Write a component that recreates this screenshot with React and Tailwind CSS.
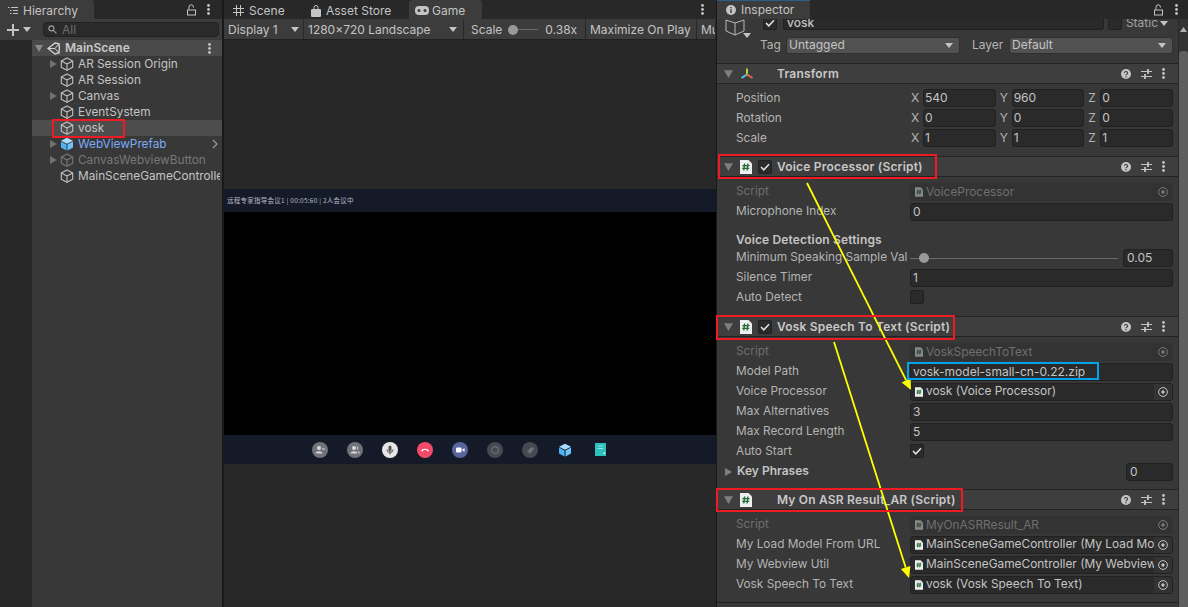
import React from "react";

const F = { fontFamily: "Inter, 'Liberation Sans', sans-serif" };

function Cube({ className = "", color = "#c2c2c2", size = 14 }) {
  return (
    <svg width={size} height={size} viewBox="0 0 14 14" fill="none" stroke={color} strokeWidth="1.1" strokeLinejoin="round" className={"shrink-0 " + className}>
      <path d="M7 1 L12.7 4 V10.2 L7 13.2 L1.3 10.2 V4 Z" />
      <path d="M1.3 4 L7 7 L12.7 4 M7 7 V13.2" />
    </svg>
  );
}
function BlueCube() {
  return (
    <svg width="14" height="14" viewBox="0 0 14 14" className="shrink-0">
      <path d="M7 .8 L13 3.8 L7 6.8 L1 3.8 Z" fill="#a6dcff" />
      <path d="M1 4.6 L6.5 7.4 V13.4 L1 10.6 Z" fill="#4fb2f5" />
      <path d="M13 4.6 L7.5 7.4 V13.4 L13 10.6 Z" fill="#6cc4fb" />
    </svg>
  );
}
function Tri({ dir = "down", className = "", color = "#8a8a8a", w = 8, h = 8 }) {
  const d = dir === "down" ? "M0 1 H8 L4 8 Z" : "M1 0 L8 4 L1 8 Z";
  return (
    <svg width={w} height={h} viewBox="0 0 8 8" className={"shrink-0 " + className}>
      <path d={d} fill={color} />
    </svg>
  );
}
function Caret({ className = "" }) {
  return (
    <svg width="8" height="5" viewBox="0 0 8 5" className={"shrink-0 " + className}>
      <path d="M0 0 H8 L4 5 Z" fill="#c4c4c4" />
    </svg>
  );
}
function Lock() {
  return (
    <svg width="9" height="12" viewBox="0 0 9 12" fill="none" className="shrink-0">
      <path d="M2 5.5 V3 A2.2 2.2 0 0 1 6.4 3 V3.6" stroke="#c4c4c4" strokeWidth="1" />
      <rect x=".5" y="6" width="8" height="5" stroke="#c4c4c4" strokeWidth="1" />
    </svg>
  );
}
function Dots({ color = "#c4c4c4" }) {
  return (
    <svg width="3" height="11" viewBox="0 0 3 11" className="shrink-0">
      <circle cx="1.5" cy="1.5" r="1.4" fill={color} />
      <circle cx="1.5" cy="5.5" r="1.4" fill={color} />
      <circle cx="1.5" cy="9.5" r="1.4" fill={color} />
    </svg>
  );
}
function ScriptIcon({ size = 12, dim = false }) {
  const w = size === 12 ? 12 : 8;
  const h = size === 12 ? 14 : 10;
  return (
    <svg width={w} height={h} viewBox="0 0 12 14" className="shrink-0" opacity={dim ? 0.45 : 1}>
      <path d="M0 0 H8.5 L12 3.5 V14 H0 Z" fill="#efefef" />
      <path d="M4.6 3.5 L3.8 10.5 M7.9 3.5 L7.1 10.5 M2.4 5.6 H9.5 M2.2 8.4 H9.2" stroke="#1f6b34" strokeWidth="1.4" fill="none" />
    </svg>
  );
}
function Check({ on = true, className = "" }) {
  return (
    <span className={"flex h-[14px] w-[14px] shrink-0 items-center justify-center rounded-[2px] border border-[#202020] bg-[#2a2a2a] " + className}>
      {on && (
        <svg width="10" height="8" viewBox="0 0 10 8" fill="none">
          <path d="M1 4 L3.8 6.8 L9 1.2" stroke="#e2e2e2" strokeWidth="1.5" />
        </svg>
      )}
    </span>
  );
}
function Help() {
  return (
    <svg width="10" height="10" viewBox="0 0 10 10" className="shrink-0">
      <circle cx="5" cy="5" r="5" fill="#c4c4c4" />
      <path d="M3.4 3.9 A1.6 1.5 0 1 1 5.4 5.4 C5 5.6 5 5.8 5 6.3" stroke="#3e3e3e" strokeWidth="1.1" fill="none" />
      <circle cx="5" cy="7.8" r=".7" fill="#3e3e3e" />
    </svg>
  );
}
function Sliders() {
  return (
    <svg width="11" height="10" viewBox="0 0 11 10" className="shrink-0" stroke="#c4c4c4" strokeWidth="1.2">
      <path d="M0 2.5 H11 M0 7.5 H11" />
      <path d="M7 0 V5 M4 5 V10" strokeWidth="1.8" />
    </svg>
  );
}
function Target({ dim = false }) {
  return (
    <span className={"flex h-full w-[18px] shrink-0 items-center justify-center bg-[#333333] " + (dim ? "opacity-50" : "")}>
      <svg width="10" height="10" viewBox="0 0 10 10">
        <circle cx="5" cy="5" r="4.4" fill="none" stroke="#c4c4c4" strokeWidth="1" />
        <circle cx="5" cy="5" r="1.7" fill="#c4c4c4" />
      </svg>
    </span>
  );
}
function UnityLogo() {
  return (
    <svg width="13" height="13" viewBox="0 0 13 13" className="shrink-0" fill="none" stroke="#d2d2d2" strokeWidth="1.4">
      <path d="M8 1 L12 1.8 L12.4 6.5 L12 11 L8 12 L1 6.5 Z" />
      <path d="M1 6.5 H8 L12 1.8 M8 6.5 L12 11" strokeWidth="1" />
    </svg>
  );
}
function TransformIcon() {
  return (
    <svg width="14" height="14" viewBox="0 0 14 14" className="shrink-0">
      <path d="M7 7.5 V1.5" stroke="#a5dc3c" strokeWidth="2" />
      <path d="M7 7.5 L1.5 11" stroke="#5cc4f0" strokeWidth="2" />
      <path d="M7 7.5 L12.5 11" stroke="#f0663c" strokeWidth="2" />
    </svg>
  );
}

function TreeRow({ label, arrow, selected, color = "text-[#c4c4c4]", icon, ext }) {
  return (
    <div className={"flex h-4 items-center pl-[17px] pr-[2px] " + (selected ? "bg-[#4d4d4d]" : "")}>
      <span className="flex w-[11px] shrink-0 items-center">{arrow && <Tri dir="right" color="#707070" />}</span>
      <span className="flex w-[18px] shrink-0 items-center">{icon || <Cube />}</span>
      <span className={"min-w-0 flex-1 overflow-hidden whitespace-nowrap text-[11.8px] leading-4 " + color}>{label}</span>
      {ext && (
        <svg width="6" height="10" viewBox="0 0 6 10" fill="none" className="mr-[2px] shrink-0">
          <path d="M1 1 L5 5 L1 9" stroke="#9a9a9a" strokeWidth="1.2" />
        </svg>
      )}
    </div>
  );
}

function Hierarchy() {
  return (
    <div className="flex h-full w-[222px] shrink-0 flex-col bg-[#383838]">
      <div className="flex h-[19px] shrink-0 items-stretch bg-[#282828]">
        <div className="flex w-[94px] items-center gap-[5px] rounded-tr-[3px] bg-[#3c3c3c] pl-[8px] pt-[2px] text-[12px] text-[#c4c4c4]">
          <svg width="10" height="9" viewBox="0 0 10 9" stroke="#c4c4c4" strokeWidth="1">
            <path d="M0 1.5 H1.5 M3 1.5 H10 M2 4.5 H3.5 M5 4.5 H10 M2 7.5 H3.5 M5 7.5 H10" />
          </svg>
          Hierarchy
        </div>
        <div className="ml-auto flex items-center gap-[11px] pr-[12px]">
          <Lock />
          <Dots />
        </div>
      </div>
      <div className="flex h-[21px] shrink-0 items-center bg-[#3c3c3c] pl-[7px] pr-[3px]">
        <svg width="12" height="12" viewBox="0 0 12 12" stroke="#c4c4c4" strokeWidth="2" className="shrink-0">
          <path d="M6 0 V12 M0 6 H12" />
        </svg>
        <Caret className="ml-[4px]" />
        <div className="ml-[12px] flex h-[15px] flex-1 items-center gap-[5px] rounded-[4px] border border-[#212121] bg-[#2a2a2a] pl-[4px] text-[12px] text-[#6d6d6d]">
          <svg width="9" height="9" viewBox="0 0 9 9" fill="none" stroke="#a0a0a0" strokeWidth="1.1">
            <circle cx="3.4" cy="3.4" r="2.5" />
            <path d="M5.4 5.4 L8.4 8.4" />
          </svg>
          All
        </div>
      </div>
      <div className="flex min-h-0 flex-1">
        <div className="w-[32px] shrink-0 bg-[#282828]" />
        <div className="min-w-0 flex-1">
          <div className="flex h-4 items-center bg-[#4a4a4a] pl-[3px] pr-[11px]">
            <Tri color="#8a8a8a" className="mr-[4px]" />
            <UnityLogo />
            <span className="ml-[5px] flex-1 text-[12px] font-semibold leading-4 text-[#c8c8c8]">MainScene</span>
            <Dots />
          </div>
          <TreeRow label="AR Session Origin" arrow />
          <TreeRow label="AR Session" />
          <TreeRow label="Canvas" arrow />
          <TreeRow label="EventSystem" />
          <TreeRow label="vosk" selected />
          <TreeRow label="WebViewPrefab" arrow icon={<BlueCube />} color="text-[#7baaf7]" ext />
          <TreeRow label="CanvasWebviewButton" arrow icon={<Cube color="#777777" />} color="text-[#777777]" />
          <TreeRow label="MainSceneGameController" />
        </div>
      </div>
    </div>
  );
}

function TB({ children, className = "" }) {
  return <div className={"flex h-[20px] shrink-0 items-center border-r border-[#282828] bg-[#3c3c3c] pt-px text-[12px] text-[#c4c4c4] " + className}>{children}</div>;
}

function MeetBtn({ bg, children }) {
  return (
    <span className="flex h-4 w-4 shrink-0 items-center justify-center rounded-full" style={{ background: bg }}>
      <svg width="10" height="10" viewBox="0 0 10 10">{children}</svg>
    </span>
  );
}

function Game() {
  return (
    <div className="flex h-full min-w-0 flex-1 flex-col bg-[#282828]">
      <div className="flex h-[19px] shrink-0 items-stretch text-[12px] text-[#c4c4c4]">
        <div className="flex w-[80px] items-center gap-[5px] pl-[9px] pt-[2px]">
          <svg width="11" height="11" viewBox="0 0 11 11" stroke="#c4c4c4" strokeWidth="1" className="shrink-0">
            <path d="M3.5 0 V11 M7.5 0 V11 M0 3.5 H11 M0 7.5 H11" />
          </svg>
          Scene
        </div>
        <div className="flex w-[105px] items-center gap-[5px] pl-[7px] pt-[2px]">
          <svg width="10" height="12" viewBox="0 0 10 12" className="shrink-0">
            <path d="M3 4 V2.5 A2 2 0 0 1 7 2.5 V4" fill="none" stroke="#c4c4c4" />
            <rect y="4" width="10" height="8" rx="1" fill="#c4c4c4" />
          </svg>
          Asset Store
        </div>
        <div className="flex w-[73px] items-center gap-[3px] rounded-t-[3px] bg-[#3c3c3c] pl-[6px] pt-[2px]">
          <svg width="14" height="9" viewBox="0 0 14 9" className="shrink-0">
            <rect width="14" height="9" rx="4" fill="#c4c4c4" />
            <circle cx="4" cy="4.5" r="1.5" fill="#3c3c3c" />
            <circle cx="10" cy="4.5" r="1.5" fill="#3c3c3c" />
          </svg>
          Game
        </div>
        <div className="ml-auto flex items-center pr-[12px]">
          <Dots />
        </div>
      </div>
      <div className="flex h-[21px] shrink-0 items-start overflow-hidden border-b border-[#202020] bg-[#3c3c3c]">
        <TB className="w-[80px] justify-between pl-[4px] pr-[4px]">
          Display 1
          <Caret />
        </TB>
        <TB className="w-[160px] justify-between pl-[4px] pr-[6px]">
          1280x720 Landscape
          <Caret />
        </TB>
        <TB className="w-[122px] pl-[7px]">
          Scale
          <span className="relative ml-[6px] flex h-[10px] w-[30px] items-center">
            <span className="h-px w-full bg-[#6a6a6a]" />
            <span className="absolute left-0 h-[10px] w-[10px] rounded-full bg-[#999999]" />
          </span>
          <span className="ml-[7px]">0.38x</span>
        </TB>
        <TB className="w-[111px] pl-[4px]">Maximize On Play</TB>
        <TB className="w-[19px] overflow-hidden pl-[4px]">Mute</TB>
      </div>
      <div className="flex min-h-0 flex-1 flex-col justify-start pt-[149px]">
        <div className="flex h-[275px] flex-col bg-black">
          <div className="flex h-[23px] shrink-0 items-center whitespace-nowrap bg-[#141a28] pl-[3px] text-[6.5px] tracking-[0.25px] text-[#b9bcc2]" style={{ fontFamily: "'Noto Sans CJK SC', sans-serif" }}>
            远程专家指导会议1 | 00:05:60 | 2人会议中
          </div>
          <div className="flex-1" />
          <div className="flex h-[29px] shrink-0 items-center bg-[#141a28] pl-[88px]">
            <div className="flex items-center gap-[19px]">
              <MeetBtn bg="#6f7278">
                <circle cx="4" cy="3" r="2" fill="#d8d8d8" />
                <path d="M0.5 8.5 C1 5.5 7 5.5 7.5 8.5 Z" fill="#d8d8d8" />
                <path d="M7 4 H10" stroke="#d8d8d8" />
              </MeetBtn>
              <MeetBtn bg="#6f7278">
                <circle cx="4" cy="3" r="2" fill="#d8d8d8" />
                <path d="M0.5 8.5 C1 5.5 7 5.5 7.5 8.5 Z" fill="#d8d8d8" />
                <path d="M7 1.5 A2 2 0 0 1 7 4.5 M8 6 L9.5 8.5" stroke="#d8d8d8" fill="none" />
              </MeetBtn>
              <MeetBtn bg="#e6e6e6">
                <rect x="3.5" y="0.5" width="3" height="6" rx="1.5" fill="#555555" />
                <path d="M2 4.5 A3 3 0 0 0 8 4.5 M5 7.5 V9.5" stroke="#555555" fill="none" />
              </MeetBtn>
              <MeetBtn bg="#f24a68">
                <path d="M1 6 C2 3 8 3 9 6 L7 6.5 L6.7 5 H3.3 L3 6.5 Z" fill="#ffffff" />
              </MeetBtn>
              <MeetBtn bg="#56659c">
                <rect x="1" y="2.5" width="5.5" height="5" rx="1" fill="#ffffff" />
                <path d="M7 5 L9.5 3 V7 Z" fill="#ffffff" />
              </MeetBtn>
              <MeetBtn bg="#454952">
                <circle cx="5" cy="5" r="3.4" fill="none" stroke="#6f7278" strokeWidth="1.1" />
              </MeetBtn>
              <MeetBtn bg="#454952">
                <path d="M2.5 7 L6.5 3 A1.1 1.1 0 0 1 8 4.5 L4 8.5 M4 6 L7 3" stroke="#797c84" strokeWidth="1.2" fill="none" />
              </MeetBtn>
              <span className="flex w-4 justify-center"><BlueCube /></span>
              <span className="flex w-4 justify-center">
                <svg width="11" height="13" viewBox="0 0 11 13">
                  <rect width="11" height="13" fill="#2cc1bd" />
                  <path d="M3 3 H8 M2.5 5.5 H8.5" stroke="#8fe4e0" />
                  <path d="M8 11 L10 9 V11 Z" fill="#ffffff" />
                </svg>
              </span>
            </div>
          </div>
        </div>
      </div>
    </div>
  );
}

function Row({ label, children, dim, bold, labelClass = "" }) {
  return (
    <div className="flex h-5 items-center pl-[19px] pr-[5px]">
      <span className={"w-[174px] shrink-0 overflow-hidden whitespace-nowrap " + (dim ? "text-[#6f6f6f] " : "text-[#b4b4b4] ") + (bold ? "text-[12px] font-semibold tracking-[0.15px] " : "text-[11.8px] ") + labelClass}>{label}</span>
      <div className="flex h-[18px] min-w-0 flex-1 items-center">{children}</div>
    </div>
  );
}
function Field({ children, pad = "pl-[2px]" }) {
  return (
    <div className={"flex h-[18px] min-w-0 flex-1 items-center overflow-hidden whitespace-nowrap rounded-[3px] border border-[#212121] bg-[#2a2a2a] text-[12px] text-[#c4c4c4] " + pad}>
      {children}
    </div>
  );
}
function ObjField({ text, dim }) {
  return (
    <div className={"flex h-[18px] min-w-0 flex-1 items-center overflow-hidden rounded-[3px] border " + (dim ? "border-[#333333] bg-[#333333]" : "border-[#212121] bg-[#2a2a2a]")}>
      <span className="ml-[4px] mr-[3px] flex shrink-0"><ScriptIcon size={8} dim={dim} /></span>
      <span className={"min-w-0 flex-1 overflow-hidden whitespace-nowrap text-[11.9px] " + (dim ? "text-[#6f6f6f]" : "-mt-[2px] text-[#c4c4c4]")}>{text}</span>
      <Target dim={dim} />
    </div>
  );
}
function Axis({ name, val }) {
  return (
    <div className="flex min-w-0 flex-1 items-center">
      <span className="w-[12px] shrink-0 text-[12px] text-[#b4b4b4]">{name}</span>
      <Field pad="pl-px">{val}</Field>
    </div>
  );
}
function Vec({ label, x, y, z }) {
  return (
    <div className="flex h-5 items-center pl-[19px] pr-[5px]">
      <span className="mt-[2px] w-[175px] shrink-0 text-[11.8px] text-[#b4b4b4]">{label}</span>
      <div className="flex flex-1 gap-[4px]">
        <Axis name="X" val={x} />
        <Axis name="Y" val={y} />
        <Axis name="Z" val={z} />
      </div>
    </div>
  );
}
function CompHeader({ icon, check, title }) {
  return (
    <div className="flex h-[21px] shrink-0 items-center border-y border-y-[#232323] bg-[#3e3e3e] pl-[7px] pr-[13px]">
      <Tri color="#7e7e7e" w={9} h={9} />
      <span className="ml-[7px] flex w-[16px] shrink-0">{icon}</span>
      <span className="ml-[2px] flex w-[16px] shrink-0">{check && <Check />}</span>
      <span className="ml-[3px] flex-1 whitespace-nowrap text-[12px] font-semibold tracking-[0.2px] text-[#c8c8c8]">{title}</span>
      <span className="flex items-center gap-[10px]">
        <Help />
        <Sliders />
        <Dots />
      </span>
    </div>
  );
}
function Select({ children }) {
  return (
    <div className="flex h-[17px] flex-1 items-center justify-between rounded-[3px] border border-[#303030] bg-[#515151] pl-[2px] pr-[6px] text-[12px] text-[#c4c4c4]">
      {children}
      <Caret />
    </div>
  );
}

function Inspector() {
  return (
    <div className="ml-[1px] flex h-full w-[471px] shrink-0 flex-col bg-[#383838]">
      <div className="flex h-[19px] shrink-0 items-stretch bg-[#282828]">
        <div className="flex w-[93px] flex-col rounded-tr-[3px] bg-[#3c3c3c]">
          <div className="h-[2px] bg-[#2c5d87]" />
          <div className="flex flex-1 items-center gap-[5px] pl-[9px] text-[12px] text-[#c4c4c4]">
            <svg width="10" height="10" viewBox="0 0 10 10" className="shrink-0">
              <circle cx="5" cy="5" r="5" fill="#c4c4c4" />
              <path d="M5 4.3 V8 M5 2 V3.2" stroke="#3c3c3c" strokeWidth="1.4" />
            </svg>
            Inspector
          </div>
        </div>
        <div className="ml-auto flex items-center gap-[12px] pr-[10px]">
          <Lock />
          <Dots />
        </div>
      </div>
      <div className="flex min-h-0 flex-1">
        <div className="min-w-0 flex-1 overflow-hidden">
          <div className="flex h-[11px] items-end overflow-hidden pl-[46px] pr-[10px]">
            <div className="flex h-[14px] w-full items-center">
              <Check />
              <div className="ml-[6px] flex h-[14px] flex-1 items-center rounded-[3px] border border-[#212121] bg-[#2a2a2a] pl-[3px] text-[12px] font-medium leading-none text-[#c4c4c4]">vosk</div>
              <span className="ml-[4px] h-[14px] w-[14px] shrink-0 rounded-[2px] border border-[#212121] bg-[#2a2a2a]" />
              <span className="ml-[4px] whitespace-nowrap text-[12px] text-[#a0a0a0]">Static</span>
              <Caret className="ml-[2px]" />
            </div>
          </div>
          <div className="flex h-[33px] items-start pr-[5px]">
            <div className="relative flex h-full w-[43px] shrink-0 pl-[8px]">
              <svg width="20" height="18" viewBox="0 0 20 18" fill="none" stroke="#b8b8b8" strokeWidth="1" className="-mt-[11px]">
                <path d="M10 4 L19 1 V12 L10 16 L1 12 V1 Z M10 4 V16" />
              </svg>
              <Caret className="absolute left-[26px] top-[3px]" />
            </div>
            <div className="flex flex-1 items-center pt-[6px]">
              <span className="w-[26px] shrink-0 text-[12px] text-[#b4b4b4]">Tag</span>
              <div className="flex w-[174px] shrink-0"><Select>Untagged</Select></div>
              <span className="ml-[12px] w-[37px] shrink-0 text-[12px] text-[#b4b4b4]">Layer</span>
              <div className="flex min-w-0 flex-1"><Select>Default</Select></div>
            </div>
          </div>
          <CompHeader icon={<TransformIcon />} title="Transform" />
          <div className="h-[4px]" />
          <Vec label="Position" x="540" y="960" z="0" />
          <Vec label="Rotation" x="0" y="0" z="0" />
          <Vec label="Scale" x="1" y="1" z="1" />
          <div className="h-[8px]" />

          <CompHeader icon={<ScriptIcon />} check title="Voice Processor (Script)" />
          <div className="h-[5px]" />
          <Row label="Script" dim><ObjField text="VoiceProcessor" dim /></Row>
          <Row label="Microphone Index"><Field>0</Field></Row>
          <div className="h-[9px]" />
          <Row label="Voice Detection Settings" bold labelClass="-mt-[2px] !w-[190px] text-[#c4c4c4]" />
          <div className="-mt-[3px]" />
          <Row label="Minimum Speaking Sample Val">
            <span className="relative flex h-[12px] flex-1 items-center">
              <span className="h-px w-full bg-[#6a6a6a]" />
              <span className="absolute left-[9px] h-[10px] w-[10px] rounded-full bg-[#999999]" />
            </span>
            <div className="ml-[5px] flex w-[50px] shrink-0"><Field pad="pl-[3px]">0.05</Field></div>
          </Row>
          <Row label="Silence Timer"><Field>1</Field></Row>
          <Row label="Auto Detect"><Check on={false} className="-mt-[2px]" /></Row>
          <div className="h-[8px]" />

          <CompHeader icon={<ScriptIcon />} check title="Vosk Speech To Text (Script)" />
          <div className="h-[5px]" />
          <Row label="Script" dim><ObjField text="VoskSpeechToText" dim /></Row>
          <Row label="Model Path"><Field>vosk-model-small-cn-0.22.zip</Field></Row>
          <Row label="Voice Processor"><ObjField text="vosk (Voice Processor)" /></Row>
          <Row label="Max Alternatives"><Field>3</Field></Row>
          <Row label="Max Record Length"><Field>5</Field></Row>
          <Row label="Auto Start"><Check className="-mt-[2px]" /></Row>
          <div className="flex h-5 items-center pl-[7px] pr-[5px]">
            <Tri dir="right" color="#7e7e7e" />
            <span className="-mt-[2px] ml-[5px] flex-1 text-[12px] font-semibold text-[#c4c4c4]">Key Phrases</span>
            <div className="flex w-[47px] shrink-0"><Field pad="pl-[3px]">0</Field></div>
          </div>
          <div className="h-[7px]" />

          <CompHeader icon={<ScriptIcon />} title="My On ASR Result_AR (Script)" />
          <div className="h-[5px]" />
          <Row label="Script" dim><ObjField text="MyOnASRResult_AR" dim /></Row>
          <Row label="My Load Model From URL"><ObjField text="MainSceneGameController (My Load Model From URL)" /></Row>
          <Row label="My Webview Util"><ObjField text="MainSceneGameController (My Webview Util)" /></Row>
          <Row label="Vosk Speech To Text"><ObjField text="vosk (Vosk Speech To Text)" /></Row>
          <div className="h-[7px]" />
          <div className="border-t border-[#232323]" />
        </div>
        <div className="relative w-[10px] shrink-0 border-l border-[#282828] bg-[#333333]">
          <svg width="7" height="5" viewBox="0 0 7 5" className="absolute left-[1px] top-[8px]">
            <path d="M3.5 0 L7 5 H0 Z" fill="#b0b0b0" />
          </svg>
          <div className="absolute bottom-0 left-0 right-0 top-[32px] rounded-t-[3px] bg-[#5f5f5f]" />
        </div>
      </div>
    </div>
  );
}

function Annotations() {
  const arrow = (x1, y1, x2, y2, id) => {
    const a = Math.atan2(y2 - y1, x2 - x1);
    const L = 11;
    const W = 5;
    const bx = x2 - L * Math.cos(a);
    const by = y2 - L * Math.sin(a);
    const px = -Math.sin(a) * W;
    const py = Math.cos(a) * W;
    return (
      <g key={id}>
        <line x1={x1} y1={y1} x2={bx} y2={by} stroke="#ffff00" strokeWidth="1.8" />
        <path d={`M${x2} ${y2} L${bx + px} ${by + py} L${bx - px} ${by - py} Z`} fill="#ffff00" />
      </g>
    );
  };
  return (
    <>
      <svg width="1188" height="607" className="pointer-events-none absolute left-0 top-0">
        {arrow(807, 183, 911, 390, "a")}
        {arrow(834, 342, 909, 578, "b")}
      </svg>
      <div className="pointer-events-none absolute left-[52px] top-[119px] h-[19px] w-[73px] border-2 border-[#ed1c24]" />
      <div className="pointer-events-none absolute left-[718px] top-[154px] h-[25px] w-[219px] border-2 border-[#ed1c24]" />
      <div className="pointer-events-none absolute left-[716px] top-[315px] h-[25px] w-[239px] border-2 border-[#ed1c24]" />
      <div className="pointer-events-none absolute left-[716px] top-[488px] h-[24px] w-[247px] border-2 border-[#ed1c24]" />
      <div className="pointer-events-none absolute left-[907px] top-[362px] h-[18px] w-[192px] border-2 border-[#00a2e8]" />
    </>
  );
}

export default function App() {
  return (
    <div className="relative flex h-[607px] w-[1188px] overflow-hidden bg-[#191919]" style={F}>
      <Hierarchy />
      <div className="flex h-full w-[2px] shrink-0 bg-[#191919]" />
      <Game />
      <Inspector />
      <Annotations />
    </div>
  );
}
